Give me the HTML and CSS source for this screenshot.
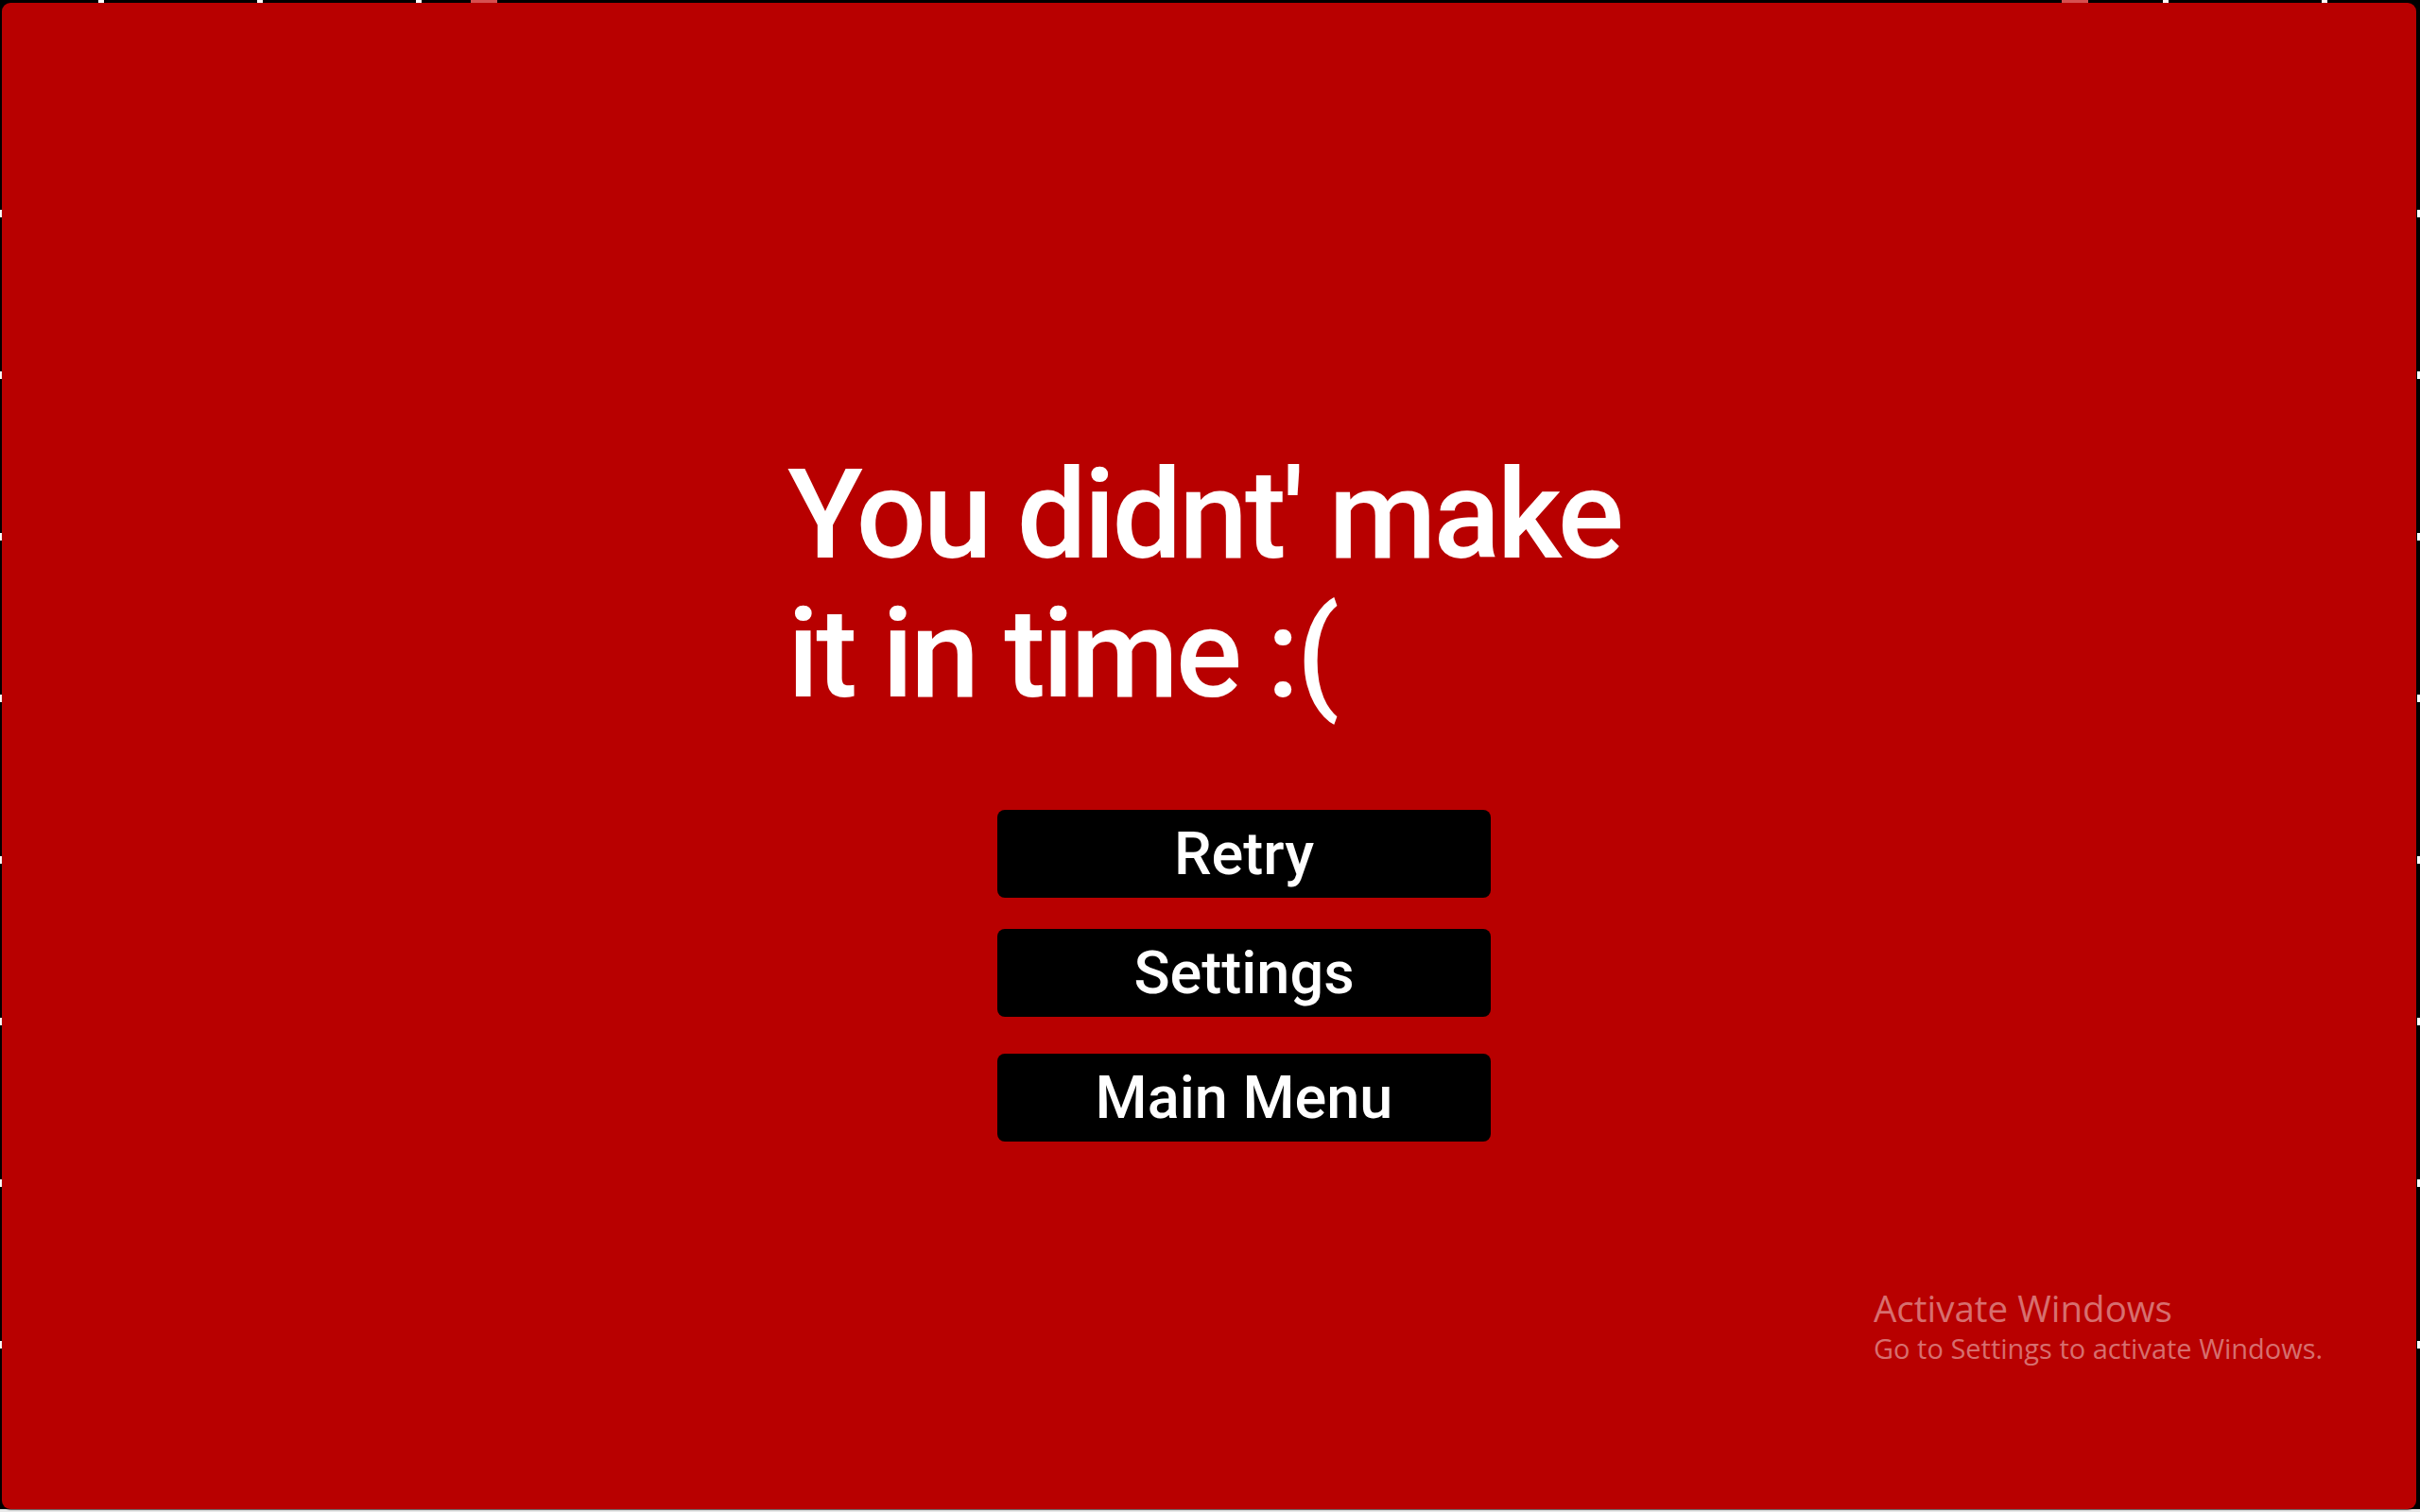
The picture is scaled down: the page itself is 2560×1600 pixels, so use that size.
FILE: index.html
```html
<!DOCTYPE html>
<html lang="en">
<head>
<meta charset="utf-8">
<title>Time's up</title>
<link rel="stylesheet" href="styles.css">
</head>
<body>
<div class="frame">
  <div class="ticks-top">
    <div class="tick-group">
      <span class="tick"></span><span class="tick"></span><span class="tick"></span>
    </div>
    <div class="tick-group">
      <span class="tick"></span><span class="tick"></span>
    </div>
  </div>
  <span class="pink-tick pink-left"></span>
  <span class="pink-tick pink-right"></span>
  <div class="ticks-side left">
    <span class="vtick"></span><span class="vtick"></span><span class="vtick"></span><span class="vtick"></span><span class="vtick"></span><span class="vtick"></span><span class="vtick"></span><span class="vtick"></span>
  </div>
  <div class="ticks-side right">
    <span class="vtick"></span><span class="vtick"></span><span class="vtick"></span><span class="vtick"></span><span class="vtick"></span><span class="vtick"></span><span class="vtick"></span><span class="vtick"></span>
  </div>
  <main class="panel">
    <h1 class="title">You didnt' make<br>it in time :(</h1>
    <nav class="menu">
      <button class="btn">Retry</button>
      <button class="btn">Settings</button>
      <button class="btn btn-last">Main Menu</button>
    </nav>
    <div class="watermark">
      <div class="wm-title">Activate Windows</div>
      <div class="wm-sub">Go to Settings to activate Windows.</div>
    </div>
  </main>
  <div class="bottom-strip"></div>
</div>
</body>
</html>
```
FILE: styles.css
```css
html, body {
  margin: 0;
  padding: 0;
  background: #000;
}
body {
  width: 2560px;
  height: 1600px;
  overflow: hidden;
}
.frame {
  position: relative;
  width: 2560px;
  height: 1600px;
  display: flex;
  flex-direction: column;
  padding: 3px 4px 0 2px;
  box-sizing: border-box;
}
.panel {
  position: relative;
  flex: 1;
  background: #b80000;
  border-radius: 9px;
  box-shadow: 0 1px 1px rgba(0,0,0,0.6);
  display: flex;
  flex-direction: column;
  align-items: flex-start;
}
.bottom-strip {
  height: 3px;
  margin: 0 -4px 0 -2px;
  background: #e9e9e9;
}
.title {
  margin: 469px 0 0 831px;
  font-family: Roboto, "Liberation Sans", sans-serif;
  font-weight: 500;
  font-size: 131px;
  line-height: 147px;
  color: #fff;
  letter-spacing: -3.2px;
  white-space: nowrap;
}
.menu {
  margin: 91px 0 0 1053px;
  display: flex;
  flex-direction: column;
  gap: 33px;
}
.btn {
  width: 522px;
  height: 93px;
  border: 0;
  border-radius: 8px;
  background: #000;
  color: #fff;
  font-family: Roboto, "Liberation Sans", sans-serif;
  font-weight: 500;
  font-size: 63px;
  line-height: 93px;
  padding: 0;
  display: flex;
  align-items: center;
  justify-content: center;
}
.btn-last {
  margin-top: 6px;
}
.watermark {
  position: absolute;
  left: 1980px;
  top: 1357px;
  color: rgba(255,255,255,0.44);
  font-family: "Open Sans", "Noto Sans", sans-serif;
}
.wm-title {
  font-size: 38.5px;
  line-height: 48px;
}
.wm-sub {
  font-size: 29px;
  line-height: 38px;
}
.ticks-top {
  position: absolute;
  left: 104px;
  right: 98px;
  top: 0;
  display: flex;
  justify-content: space-between;
}
.tick-group {
  display: flex;
  gap: 162px;
}
.tick {
  width: 6px;
  height: 3px;
  background: #fff;
}
.pink-tick {
  position: absolute;
  top: 0;
  width: 28px;
  height: 3px;
  background: #d65050;
}
.pink-left { left: 498px; }
.pink-right { left: 2181px; }
.ticks-side {
  position: absolute;
  top: 222px;
  display: flex;
  flex-direction: column;
  gap: 163px;
}
.ticks-side.left { left: 0; }
.ticks-side.right { right: 0; }
.vtick {
  width: 3px;
  height: 8px;
  background: #fff;
}
```
